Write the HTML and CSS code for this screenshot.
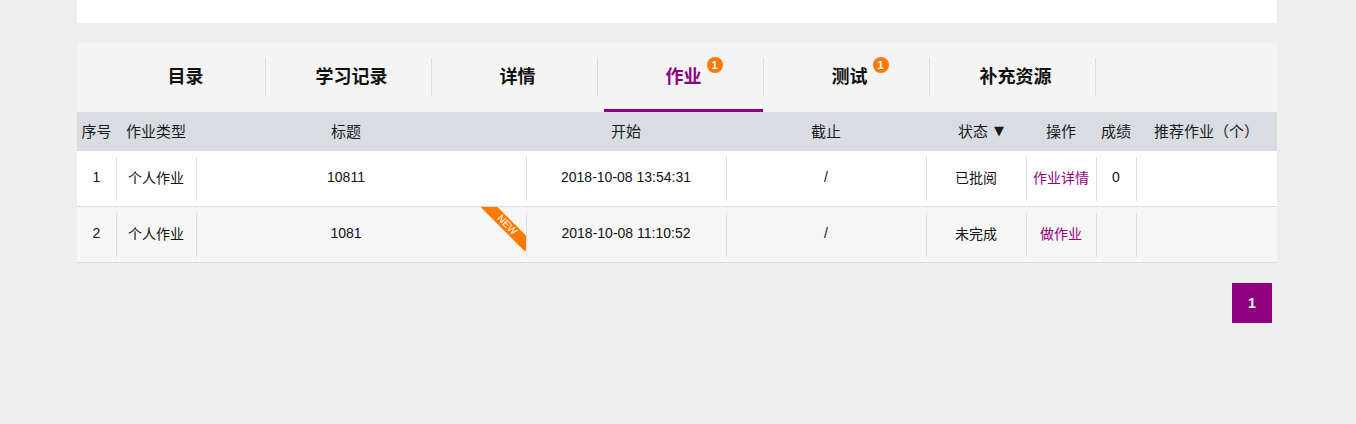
FILE: index.html
```html
<!DOCTYPE html>
<html lang="zh-CN">
<head>
<meta charset="utf-8">
<title>作业</title>
<link rel="stylesheet" href="styles.css">
</head>
<body>
<div class="page">
  <div class="top-block"></div>
  <div class="panel">
    <ul class="tabs">
      <li class="tab"><a class="tab-link">目录</a></li>
      <li class="tab"><a class="tab-link">学习记录</a></li>
      <li class="tab"><a class="tab-link">详情</a></li>
      <li class="tab"><a class="tab-link active"><span class="tab-text">作业<span class="badge">1</span></span></a></li>
      <li class="tab"><a class="tab-link"><span class="tab-text">测试<span class="badge">1</span></span></a></li>
      <li class="tab"><a class="tab-link">补充资源</a></li>
    </ul>
    <div class="table">
      <div class="row head">
        <div class="cell">序号</div>
        <div class="cell">作业类型</div>
        <div class="cell title-cell">标题</div>
        <div class="cell">开始</div>
        <div class="cell">截止</div>
        <div class="cell status-head">状态<span class="tri">▼</span></div>
        <div class="cell">操作</div>
        <div class="cell">成绩</div>
        <div class="cell">推荐作业（个）</div>
      </div>
      <div class="row body">
        <div class="cell">1</div>
        <div class="cell sep">个人作业</div>
        <div class="cell sep title-cell">10811</div>
        <div class="cell sep">2018-10-08 13:54:31</div>
        <div class="cell sep">/</div>
        <div class="cell sep">已批阅</div>
        <div class="cell sep link">作业详情</div>
        <div class="cell sep">0</div>
        <div class="cell sep"></div>
      </div>
      <div class="row body alt">
        <div class="cell">2</div>
        <div class="cell sep">个人作业</div>
        <div class="cell sep title-cell ribbon-cell">1081<span class="ribbon">NEW</span></div>
        <div class="cell sep">2018-10-08 11:10:52</div>
        <div class="cell sep">/</div>
        <div class="cell sep">未完成</div>
        <div class="cell sep link">做作业</div>
        <div class="cell sep"></div>
        <div class="cell sep"></div>
      </div>
    </div>
    <div class="pager">
      <a class="page-btn">1</a>
    </div>
  </div>
</div>
</body>
</html>
```

FILE: styles.css
```css
* { box-sizing: border-box; }
html, body { margin: 0; padding: 0; }
body {
  background: #eeeeee;
  font-family: "Liberation Sans", "Noto Sans CJK SC", sans-serif;
  color: #111;
  padding-right: 2px;
}
.page {
  width: 1200px;
  margin: 0 auto;
}
.top-block {
  height: 23px;
  background: #fff;
}
.panel {
  margin-top: 20px;
}
.tabs {
  list-style: none;
  margin: 0;
  padding: 0 0 0 23px;
  height: 69px;
  background: #f4f4f4;
  display: flex;
}
.tab {
  display: flex;
  padding-left: 6px;
}
.tab::after {
  content: "";
  width: 1px;
  height: 38px;
  align-self: center;
  margin-top: -2px;
  background: #dcdcdc;
}
.tab-link {
  width: 159px;
  height: 69px;
  display: flex;
  align-items: center;
  justify-content: center;
  font-size: 18px;
  font-weight: bold;
  color: #111;
  border-bottom: 3px solid transparent;
  padding-bottom: 2px;
}
.tab-link.active {
  color: #8f0080;
  border-bottom-color: #8f0080;
}
.tab-text {
  position: relative;
}
.badge {
  position: absolute;
  left: 100%;
  margin-left: 5px;
  top: -5px;
  width: 16px;
  height: 16px;
  border-radius: 50%;
  background: #ff7800;
  color: #fff;
  font-size: 11px;
  line-height: 16px;
  text-align: center;
  font-weight: bold;
}
.table {
  background: #fff;
}
.row {
  display: grid;
  grid-template-columns: 39px 80px 330px 200px 200px 100px 70px 40px 141px;
}
.row.head {
  height: 39px;
  background: #d9dde3;
  font-size: 15px;
  color: #1a1a1a;
}
.row.body {
  height: 56px;
  border-bottom: 1px solid #dddddd;
  font-size: 14px;
  background: #fff;
}
.row.body.alt {
  background: #f6f6f6;
}
.cell {
  display: flex;
  align-items: center;
  justify-content: center;
  position: relative;
  white-space: nowrap;
}
.row.head .cell {
  padding-bottom: 2px;
}
.row.body .cell {
  padding-bottom: 3px;
}
.row.body .title-cell,
.row.head .title-cell {
  padding-right: 30px;
}
.status-head {
  padding-left: 10px;
}
.tri {
  font-size: 13px;
  margin-left: 6px;
  font-family: "DejaVu Sans", sans-serif;
}
.cell.sep::before {
  content: "";
  position: absolute;
  left: 0;
  top: 6px;
  bottom: 5px;
  width: 1px;
  background: #dddddd;
}
.cell.link {
  color: #8f0080;
}
.ribbon-cell {
  overflow: hidden;
}
.ribbon {
  position: absolute;
  top: 12px;
  right: -12px;
  width: 62px;
  height: 12px;
  background: #ff7a00;
  color: #fff;
  font-size: 10px;
  line-height: 12px;
  text-align: center;
  transform: rotate(45deg);
}
.pager {
  display: flex;
  justify-content: flex-end;
  padding: 20px 5px 0 0;
}
.page-btn {
  width: 40px;
  height: 40px;
  background: #8f0080;
  color: #fff;
  font-weight: bold;
  font-size: 14px;
  display: flex;
  align-items: center;
  justify-content: center;
}
```
